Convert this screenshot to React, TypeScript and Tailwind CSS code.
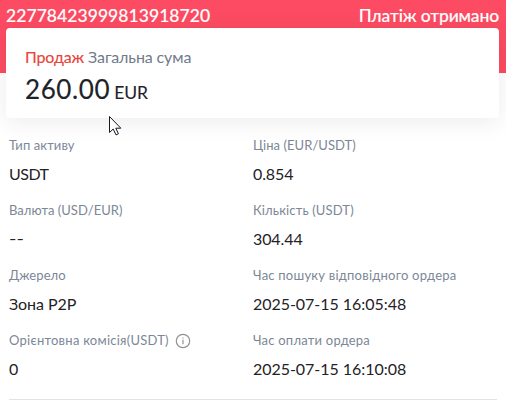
import type { ReactNode } from "react";

interface Field {
  label: string;
  value: string;
  labelClass: string;
  valueClass: string;
  icon?: ReactNode;
}

function InfoIcon() {
  return (
    <svg className="ml-[6px] h-4 w-4 shrink-0" viewBox="0 0 16 16" fill="none" stroke="#929292">
      <circle cx="8" cy="8" r="6.7" strokeWidth="1.2" />
      <path d="M8 6.8V11.3" strokeWidth="1.2" />
      <path d="M8 4.4V5.6" strokeWidth="1.2" />
    </svg>
  );
}

const fields: Field[] = [
  { label: "Тип активу", value: "USDT", labelClass: "tracking-[0.1px]", valueClass: "tracking-[-0.5px]" },
  { label: "Ціна (EUR/USDT)", value: "0.854", labelClass: "tracking-[0.05px]", valueClass: "tracking-[-0.1px]" },
  { label: "Валюта (USD/EUR)", value: "--", labelClass: "tracking-[0.03px]", valueClass: "relative -top-px inline-block origin-left scale-x-[1.25]" },
  { label: "Кількість (USDT)", value: "304.44", labelClass: "tracking-[0.14px]", valueClass: "tracking-[-0.1px]" },
  { label: "Джерело", value: "Зона P2P", labelClass: "tracking-[0.08px]", valueClass: "tracking-[-0.05px]" },
  { label: "Час пошуку відповідного ордера", value: "2025-07-15 16:05:48", labelClass: "tracking-[0.23px]", valueClass: "tracking-[-0.04px]" },
  { label: "Орієнтовна комісія(USDT)", value: "0", labelClass: "tracking-[0.24px]", valueClass: "tracking-[0px]", icon: <InfoIcon /> },
  { label: "Час оплати ордера", value: "2025-07-15 16:10:08", labelClass: "tracking-[0.22px]", valueClass: "tracking-[-0.04px]" },
];

export default function App() {
  return (
    <div className="relative h-[401px] w-[506px] overflow-hidden bg-white font-['Lato',Roboto,sans-serif]">
      <header className="flex h-[73px] items-start justify-between bg-[#fc4b62] px-[6px] pt-1 text-[17.5px] leading-6 font-medium text-white [-webkit-text-stroke:0.15px_white]">
        <span className="tracking-[0.06px]">22778423999813918720</span>
        <span className="mr-px tracking-[-0.15px]">Платіж отримано</span>
      </header>

      {/* Summary card overlaps the header */}
      <section className="relative mx-[6px] mr-[7px] -mt-[45px] h-[90px] rounded-[4px] bg-white px-[19px] pt-[17px] shadow-[0_4px_24px_rgba(0,0,0,0.08)]">
        <div className="text-[16px] leading-6 tracking-[-0.12px] text-[#707a8a]">
          <span className="text-[#e8443a] [-webkit-text-stroke:0.15px_#e8443a]">Продаж</span> Загальна сума
        </div>
        <div className="mt-px flex items-baseline gap-[4px] leading-[38px] text-[#1e2329]">
          <span className="text-[26px] tracking-[0.6px] [-webkit-text-stroke:0.15px_#1e2329]">260.00</span>
          <span className="text-[17.5px] [-webkit-text-stroke:0.1px_#1e2329]">EUR</span>
        </div>
      </section>

      <dl className="mr-[9px] ml-[9px] mt-[17px] grid h-[265px] grid-cols-[244px_244px] auto-rows-[65px] border-b border-[#e3e3e3]">
        {fields.map((f) => (
          <div key={f.label}>
            <dt className="flex h-[21px] items-center text-[13px] leading-[21px] whitespace-nowrap text-[#7c8797]">
              <span className={f.labelClass}>{f.label}</span>
              {f.icon}
            </dt>
            <dd className="mt-[6px] text-[16px] leading-6 whitespace-nowrap text-[#1f2226]">
              <span className={f.valueClass}>{f.value}</span>
            </dd>
          </div>
        ))}
      </dl>

      {/* Mouse pointer */}
      <svg className="absolute top-[116px] left-[109px]" width="13" height="20" viewBox="0 0 13 20">
        <path d="M.5.5V16.5L4.2 13L7 18.9L9.4 17.8L6.8 12.2H11.8Z" fill="#fff" stroke="#171923" />
      </svg>
    </div>
  );
}
